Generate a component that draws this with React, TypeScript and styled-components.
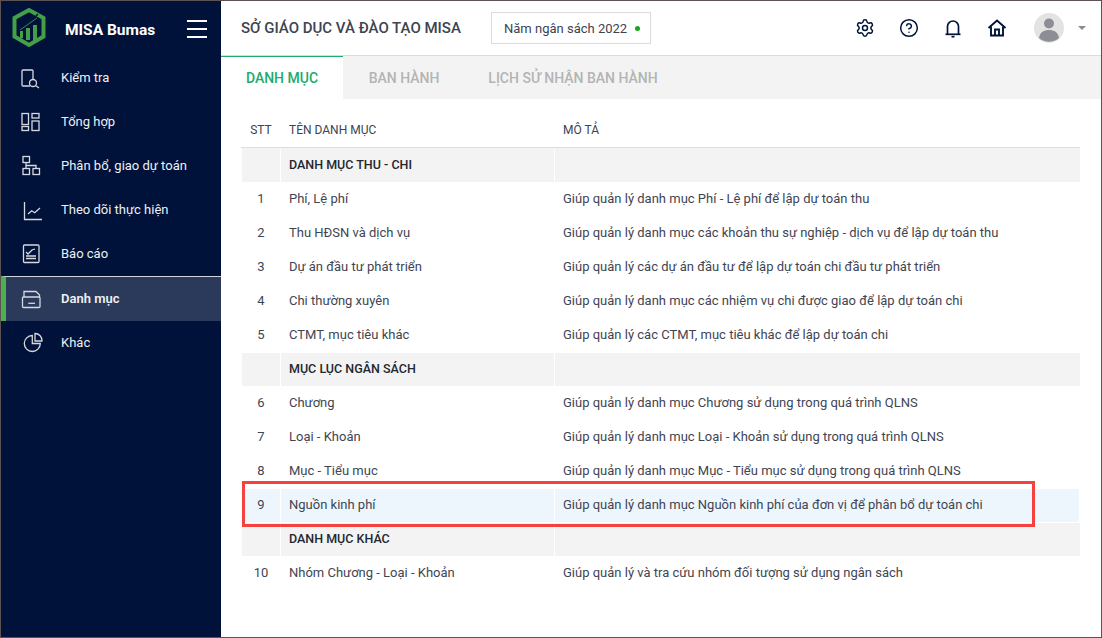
import React from "react";
import styled, { createGlobalStyle } from "styled-components";
import { Settings, CircleHelp } from "lucide-react";

const GlobalStyle = createGlobalStyle`
  html, body { margin: 0; padding: 0; background: #fff; }
  * { box-sizing: border-box; }
  body { font-family: Roboto, "Noto Sans", sans-serif; }
`;

const Frame = styled.div`
  width: 1102px;
  height: 638px;
  border: 1px solid #5d5252;
  display: flex;
  overflow: hidden;
  background: #fff;
`;
const Sidebar = styled.aside`
  width: 220px;
  flex: none;
  background: #001239;
  display: flex;
  flex-direction: column;
`;
const Brand = styled.div`
  height: 54px;
  display: flex;
  align-items: center;
  padding-left: 10px;
  color: #fff;
`;
const BrandName = styled.span`
  font-size: 15.5px;
  font-weight: 700;
  margin-left: 18px;
  margin-top: 3px;
  width: 122px;
  white-space: nowrap;
`;
const Burger = styled.div`
  width: 20px;
  height: 18px;
  display: flex;
  flex-direction: column;
  justify-content: space-between;
  margin-top: 1px;
  span {
    display: block;
    height: 2px;
    background: #fff;
  }
`;
const Menu = styled.nav`
  display: flex;
  flex-direction: column;
`;
const MenuItem = styled.div<{ $active?: boolean }>`
  height: ${(p) => (p.$active ? "45px" : "44px")};
  display: flex;
  align-items: center;
  font-size: 13px;
  color: #eef0f4;
  font-weight: ${(p) => (p.$active ? 600 : 400)};
  background: ${(p) => (p.$active ? "#2b3a5a" : "transparent")};
  border-top: ${(p) => (p.$active ? "1px solid #cfd3da" : "none")};
  border-left: 5px solid ${(p) => (p.$active ? "#4caf50" : "transparent")};
  margin-top: ${(p) => (p.$active ? "1px" : "0")};
  padding-left: 15px;
  padding-bottom: ${(p) => (p.$active ? "1px" : "0")};
  &:last-child {
    margin-top: -1px;
  }
  svg {
    flex: none;
    margin-right: 20px;
    margin-top: 2px;
    overflow: visible;
  }
`;
const Main = styled.main`
  flex: 1;
  min-width: 0;
  display: flex;
  flex-direction: column;
`;
const Header = styled.header`
  height: 55px;
  flex: none;
  border-bottom: 1px solid #dcdcdc;
  display: flex;
  align-items: center;
  padding-left: 20px;
`;
const OrgName = styled.div`
  font-size: 15px;
  font-weight: 500;
  color: #3d4350;
  width: 250px;
  white-space: nowrap;
`;
const YearBox = styled.div`
  width: 160px;
  height: 32px;
  border: 1px solid #dcdcdc;
  display: flex;
  align-items: center;
  padding-left: 12px;
  font-size: 13px;
  color: #3d4350;
`;
const Dot = styled.span`
  width: 5px;
  height: 5px;
  border-radius: 50%;
  background: #16a81c;
  margin-left: 8px;
`;
const Actions = styled.div`
  margin-left: auto;
  display: flex;
  align-items: center;
  padding-right: 15px;
  color: #00133b;
`;
const ActionIcon = styled.span`
  width: 44px;
  height: 24px;
  display: flex;
  align-items: center;
  justify-content: center;
`;
const Avatar = styled.svg`
  margin-left: 15px;
`;
const Caret = styled.span`
  width: 0;
  height: 0;
  margin-left: 14px;
  border-left: 4px solid transparent;
  border-right: 4px solid transparent;
  border-top: 4px solid #8b8b93;
`;
const Tabs = styled.div`
  height: 43px;
  flex: none;
  display: flex;
  background: #f3f3f3;
`;
const Tab = styled.div<{ $active?: boolean; $w: number }>`
  width: ${(p) => p.$w}px;
  display: flex;
  align-items: center;
  justify-content: center;
  font-size: 14px;
  font-weight: 500;
  color: ${(p) => (p.$active ? "#22ab6c" : "#b4b4b4")};
  background: ${(p) => (p.$active ? "#fff" : "transparent")};
  border-top: 1px solid ${(p) => (p.$active ? "#22ab6c" : "transparent")};
`;
const TableWrap = styled.div`
  padding: 14px 21px 0 20px;
`;
const HeadRow = styled.div`
  display: grid;
  grid-template-columns: 40px 274px 1fr;
  height: 35px;
  border-bottom: 1px solid #dedede;
  align-items: center;
  font-size: 12px;
  color: #3d4350;
`;
const Rows = styled.div`
  display: flex;
  flex-direction: column;
`;
const Row = styled.div<{ $selected?: boolean; $group?: boolean }>`
  display: grid;
  grid-template-columns: 39px 274px 1fr;
  height: 34px;
  align-items: stretch;
  font-size: 13px;
  color: #3f4552;
  background: ${(p) =>
    p.$selected ? "#edf6fd" : p.$group ? "#f3f3f3" : "#fff"};
  border-top: 1px solid #fff;
  border-left: 1px solid #fff;
  position: ${(p) => (p.$selected ? "relative" : "static")};
  z-index: ${(p) => (p.$selected ? 1 : "auto")};
  &:first-child {
    border-top-color: #f3f3f3;
  }
`;
const Cell = styled.div<{ $center?: boolean; $bold?: boolean }>`
  display: flex;
  align-items: center;
  padding-left: ${(p) => (p.$center ? 0 : 8)}px;
  padding-bottom: 2px;
  justify-content: ${(p) => (p.$center ? "center" : "flex-start")};
  border-right: 1px solid #fff;
  white-space: nowrap;
  font-size: ${(p) => (p.$bold ? 12.5 : 13)}px;
  font-weight: ${(p) => (p.$bold ? 500 : 400)};
  color: ${(p) => (p.$bold ? "#23272f" : "inherit")};
  &:last-of-type {
    border-right: 0;
  }
`;
const HeadCell = styled(Cell)`
  font-size: 12px;
  border: 0;
  padding-bottom: 0;
`;
const Marker = styled.div`
  position: absolute;
  left: 0;
  top: -8px;
  width: 793px;
  height: 46px;
  border: 3px solid #f5413f;
  pointer-events: none;
`;

const Logo = () => (
  <svg width="36" height="42" viewBox="0 0 36 42">
    <path d="M18 3 32.500 11V29.500L18 38 3.500 29.500V11Z" fill="none" stroke="#43a047" strokeWidth="4" />
    <path d="M22 12 27 7" stroke="#001239" strokeWidth="1.500" />
    <path d="M9 24h3v7H9ZM15 21h4v12h-4ZM22 18h4v16h-4Z" fill="#43a047" />
    <path d="M9 23 26 11" fill="none" stroke="#3b8a50" strokeWidth="1" />
  </svg>
);

const Ico = ({ children }: { children: React.ReactNode }) => (
  <svg width="20" height="20" viewBox="0 0 20 20" fill="none" stroke="#d6d9df" strokeWidth="1.300">
    {children}
  </svg>
);

const items: { label: string; active?: boolean; icon: React.ReactNode }[] = [
  {
    label: "Kiểm tra",
    icon: (
      <Ico>
        <path d="M9 18H2a1 1 0 0 1-1-1V3a1 1 0 0 1 1-1h9a1 1 0 0 1 1 1v8" />
        <circle cx="12" cy="15" r="3.500" />
        <path d="M14.500 17.500 18 20" />
      </Ico>
    ),
  },
  {
    label: "Tổng hợp",
    icon: (
      <Ico>
        <rect x="1" y="1.500" width="6.500" height="11" />
        <rect x="11" y="1.500" width="7" height="4.500" />
        <rect x="1" y="14.500" width="6.500" height="4" />
        <rect x="11" y="9" width="7" height="9.500" />
      </Ico>
    ),
  },
  {
    label: "Phân bổ, giao dự toán",
    icon: (
      <Ico>
        <rect x="2" y="0.500" width="6.500" height="6" />
        <rect x="2" y="12.500" width="6.500" height="6" />
        <rect x="12" y="12.500" width="6.500" height="6" />
        <path d="M5 6.500V12.500M5 9.500H15V12.500" />
      </Ico>
    ),
  },
  {
    label: "Theo dõi thực hiện",
    icon: (
      <Ico>
        <path d="M3.500 2V19.500H21" />
        <path d="M7 14 10.700 10.700 13.700 12.700 19 8" />
      </Ico>
    ),
  },
  {
    label: "Báo cáo",
    icon: (
      <Ico>
        <rect x="2.500" y="1" width="15.500" height="17.500" rx="1" />
        <path d="M5 8 7 10 11 6 14 5M5 12H15M5 14.500H15" />
      </Ico>
    ),
  },
  {
    label: "Danh mục",
    active: true,
    icon: (
      <Ico>
        <path d="M3 7V1.500H15L18.500 5V7" />
        <rect x="1.500" y="7" width="17.500" height="10.500" rx="1" />
        <path d="M7.300 13.300H14" />
      </Ico>
    ),
  },
  {
    label: "Khác",
    icon: (
      <Ico>
        <path d="M11.300 2.500a8 8 0 1 0 8 8H11.300Z" />
        <path d="M14 0.500a7 7 0 0 1 7 7.500H14Z" />
      </Ico>
    ),
  },
];

type R = { group?: string; no?: number; name?: string; desc?: string; selected?: boolean };
const rows: R[] = [
  { group: "DANH MỤC THU - CHI" },
  { no: 1, name: "Phí, Lệ phí", desc: "Giúp quản lý danh mục Phí - Lệ phí để lập dự toán thu" },
  { no: 2, name: "Thu HĐSN và dịch vụ", desc: "Giúp quản lý danh mục các khoản thu sự nghiệp - dịch vụ để lập dự toán thu" },
  { no: 3, name: "Dự án đầu tư phát triển", desc: "Giúp quản lý các dự án đầu tư để lập dự toán chi đầu tư phát triển" },
  { no: 4, name: "Chi thường xuyên", desc: "Giúp quản lý danh mục các nhiệm vụ chi được giao để lập dự toán chi" },
  { no: 5, name: "CTMT, mục tiêu khác", desc: "Giúp quản lý các CTMT, mục tiêu khác để lập dự toán chi" },
  { group: "MỤC LỤC NGÂN SÁCH" },
  { no: 6, name: "Chương", desc: "Giúp quản lý danh mục Chương sử dụng trong quá trình QLNS" },
  { no: 7, name: "Loại - Khoản", desc: "Giúp quản lý danh mục Loại - Khoản sử dụng trong quá trình QLNS" },
  { no: 8, name: "Mục - Tiểu mục", desc: "Giúp quản lý danh mục Mục - Tiểu mục sử dụng trong quá trình QLNS" },
  { no: 9, name: "Nguồn kinh phí", desc: "Giúp quản lý danh mục Nguồn kinh phí của đơn vị để phân bổ dự toán chi", selected: true },
  { group: "DANH MỤC KHÁC" },
  { no: 10, name: "Nhóm Chương - Loại - Khoản", desc: "Giúp quản lý và tra cứu nhóm đối tượng sử dụng ngân sách" },
];

export default function App() {
  return (
    <>
      <GlobalStyle />
      <Frame>
        <Sidebar>
          <Brand>
            <Logo />
            <BrandName>MISA Bumas</BrandName>
            <Burger>
              <span />
              <span />
              <span />
            </Burger>
          </Brand>
          <Menu>
            {items.map((it) => (
              <MenuItem key={it.label} $active={it.active}>
                {it.icon}
                {it.label}
              </MenuItem>
            ))}
          </Menu>
        </Sidebar>
        <Main>
          <Header>
            <OrgName>SỞ GIÁO DỤC VÀ ĐÀO TẠO MISA</OrgName>
            <YearBox>
              Năm ngân sách 2022
              <Dot />
            </YearBox>
            <Actions>
              <ActionIcon>
                <Settings size={20} strokeWidth={1.8} />
              </ActionIcon>
              <ActionIcon>
                <CircleHelp size={20} strokeWidth={1.8} />
              </ActionIcon>
              <ActionIcon>
                <svg width="20" height="20" viewBox="0 0 20 20" fill="none" stroke="currentColor" strokeWidth="1.700">
                  <path d="M4.500 16V8.500a5.500 5.500 0 0 1 11 0V16" />
                  <path d="M2.500 16.300H17.500" />
                  <path d="M8.500 18.700H11.500" />
                </svg>
              </ActionIcon>
              <ActionIcon>
                <svg width="20" height="20" viewBox="0 0 20 20" fill="none" stroke="currentColor" strokeWidth="1.900">
                  <path d="M1.500 10 10 2.500 18.500 10" />
                  <path d="M4 8.500V17.500H16V8.500" />
                  <path d="M8 17.500V11.500H12V17.500" />
                </svg>
              </ActionIcon>
              <Avatar width="30" height="30" viewBox="0 0 30 30">
                <circle cx="15" cy="15" r="15" fill="#e3e3e4" />
                <circle cx="15" cy="10.500" r="5" fill="#8d8d96" />
                <path d="M5 25c1-6 5-8 10-8s9 2 10 8a15 15 0 0 1-20 0Z" fill="#8d8d96" />
              </Avatar>
              <Caret />
            </Actions>
          </Header>
          <Tabs>
            <Tab $active $w={122}>DANH MỤC</Tab>
            <Tab $w={122}>BAN HÀNH</Tab>
            <Tab $w={216}>LỊCH SỬ NHẬN BAN HÀNH</Tab>
          </Tabs>
          <TableWrap>
            <HeadRow>
              <HeadCell $center>STT</HeadCell>
              <HeadCell>TÊN DANH MỤC</HeadCell>
              <HeadCell>MÔ TẢ</HeadCell>
            </HeadRow>
            <Rows>
              {rows.map((r, i) =>
                r.group ? (
                  <Row key={i} $group>
                    <Cell />
                    <Cell $bold>{r.group}</Cell>
                    <Cell />
                  </Row>
                ) : (
                  <Row key={i} $selected={r.selected}>
                    <Cell $center>{r.no}</Cell>
                    <Cell>{r.name}</Cell>
                    <Cell>{r.desc}</Cell>
                    {r.selected && <Marker />}
                  </Row>
                )
              )}
            </Rows>
          </TableWrap>
        </Main>
      </Frame>
    </>
  );
}
